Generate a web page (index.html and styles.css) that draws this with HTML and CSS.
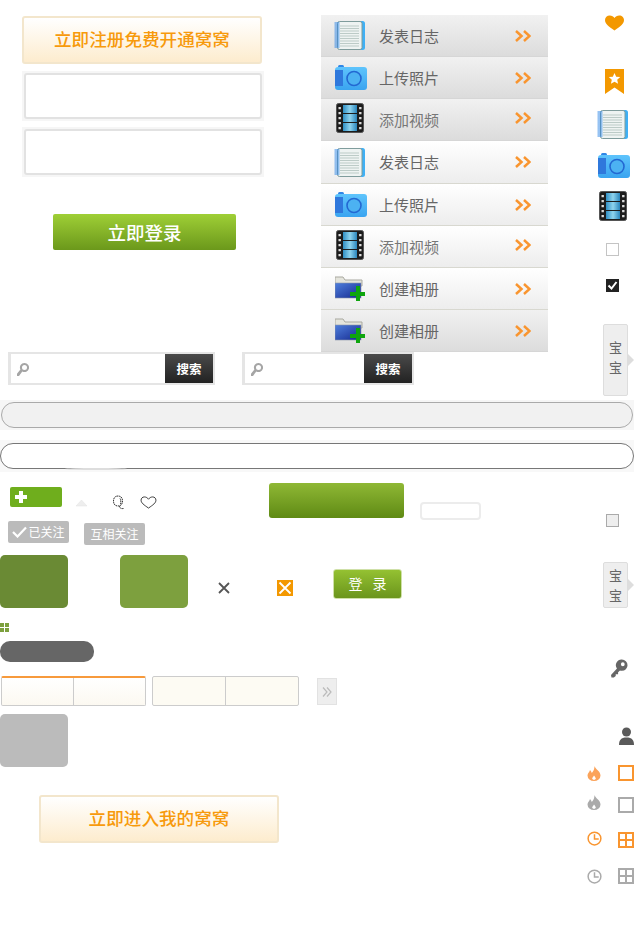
FILE: index.html
```html
<!DOCTYPE html>
<html lang="zh">
<head>
<meta charset="utf-8">
<title>Sprite</title>
<link rel="stylesheet" href="styles.css">
</head>
<body>
<svg class="defs" width="0" height="0" aria-hidden="true">
  <defs>
    <linearGradient id="gFilm" x1="0" x2="1" y1="0" y2="0"><stop offset="0" stop-color="#2f8fc4"/><stop offset=".5" stop-color="#8fd4ee"/><stop offset="1" stop-color="#2a86bd"/></linearGradient>
    <linearGradient id="gFolder" x1="0" x2="1" y1="0" y2="1"><stop offset="0" stop-color="#4f7fdc"/><stop offset="1" stop-color="#14288f"/></linearGradient>
    <linearGradient id="gCam" x1="0" x2="0" y1="0" y2="1"><stop offset="0" stop-color="#5ec4fc"/><stop offset="1" stop-color="#3aa4f0"/></linearGradient>
    <symbol id="i-note" viewBox="0 0 31 29">
      <rect x="5" y="0" width="26" height="29" rx="2.500" fill="#3fb0f5"/>
      <rect x="3.500" y=".5" width="24.500" height="28" rx="2" fill="#eef3f2" stroke="#7f9c9c"/>
      <path d="M6 5h19M6 7.500h19M6 10h19M6 12.500h19M6 15h19M6 17.500h19M6 20h19M6 22.500h19M6 25h19" stroke="#bccbc7" stroke-width="1"/>
      <path d="M.5 2h5M.5 4h5M.5 6h5M.5 8h5M.5 10h5M.5 12h5M.5 14h5M.5 16h5M.5 18h5M.5 20h5M.5 22h5M.5 24h5M.5 26h5" stroke="#2f86e6" stroke-width="1"/>
    </symbol>
    <symbol id="i-cam" viewBox="0 0 32 25">
      <rect x="3" y="0" width="6" height="4" rx="1.500" fill="#2f86e6"/>
      <rect x="0" y="2" width="32" height="23" rx="3" fill="url(#gCam)"/>
      <rect x="0" y="5" width="8" height="16" fill="#2f78dc"/>
      <circle cx="19" cy="13.500" r="7" fill="#4cb2f2" stroke="#2368d2" stroke-width="1.600"/>
    </symbol>
    <symbol id="i-film" viewBox="0 0 28 30">
      <rect x=".5" y=".5" width="27" height="29" rx="2" fill="#1c1c1c" stroke="#555"/>
      <rect x="7" y="2" width="14" height="8" fill="url(#gFilm)"/>
      <rect x="7" y="11" width="14" height="8" fill="url(#gFilm)"/>
      <rect x="7" y="20" width="14" height="8" fill="url(#gFilm)"/>
      <path d="M3.700 4v23M24.300 4v23" stroke="#dcdcdc" stroke-width="2.400" stroke-dasharray="2.200 2.800"/>
    </symbol>
    <symbol id="i-folder" viewBox="0 0 30 25">
      <path d="M0 1h8l2 3h17v6H0z" fill="#e4e4dc" stroke="#a9a9a0"/>
      <rect x="0" y="7" width="26" height="15" fill="url(#gFolder)" stroke="#8a94a8" stroke-width=".6"/>
      <path d="M21 10h4v6h5v4h-5v5h-4v-5h-6v-4h6z" fill="#0ea50e"/>
    </symbol>
    <symbol id="i-chev" viewBox="0 0 16 12">
      <path d="M1 1l5.500 5L1 11M9 1l5.500 5L9 11" fill="none" stroke="#f9952f" stroke-width="2.500"/>
    </symbol>
    <symbol id="i-flame" viewBox="0 0 14 15">
      <path d="M7.500 0C8 3 13.500 5 13.500 9.500A6.500 5.500 0 0 1 7 15 6.500 5.500 0 0 1 .5 9.500C.5 7.500 2.500 6 3 4c1 1 1.500 2 1.800 3C6.500 5 7.500 3 7.500 0zM7 9.500c-.8 1.200-1.800 2.300-1.800 3.500L7 14l1.800-1c0-1.200-1-2.500-1.800-3.500z" fill="currentColor" fill-rule="evenodd"/>
    </symbol>
    <symbol id="i-clock" viewBox="0 0 16 16">
      <circle cx="8" cy="8" r="6.800" fill="none" stroke="currentColor" stroke-width="1.600"/>
      <path d="M8 3.500V8.500H12.500" fill="none" stroke="currentColor" stroke-width="1.600"/>
    </symbol>
    <symbol id="i-key" viewBox="0 0 18 19">
      <path d="M11.500 0a6 6 0 0 1 0 12c-.8 0-1.500-.2-2-.4L7.500 13.500V15.500H5V17.500L3 19H0.500L0 16.500 6.300 9.500A6 6 0 0 1 11.500 0zM12.500 3a2 2 0 1 0 0 4 2 2 0 0 0 0-4z" fill="#666" fill-rule="evenodd"/>
    </symbol>
    <symbol id="i-search" viewBox="0 0 12 13">
      <path d="M7.500 0a4.500 4.500 0 1 1-2.200 8.400L2 13H0V10.800L3.400 6.500A4.500 4.500 0 0 1 7.500 0zM7.500 2a2.500 2.500 0 1 0 0 5 2.500 2.500 0 0 0 0-5z" fill="#a5a5a5" fill-rule="evenodd"/>
    </symbol>
  </defs>
</svg>

<main class="sheet">
  <button class="cta cta-reg">立即注册免费开通窝窝</button>
  <div class="field field-a"><input class="field-in" type="text"></div>
  <div class="field field-b"><input class="field-in" type="text"></div>
  <button class="login">立即登录</button>

  <ul class="menu">
    <li class="row row-gray"><svg class="ico ico-note"><use href="#i-note"/></svg><span class="lbl">发表日志</span><svg class="chev"><use href="#i-chev"/></svg></li>
    <li class="row row-gray"><svg class="ico ico-cam"><use href="#i-cam"/></svg><span class="lbl">上传照片</span><svg class="chev"><use href="#i-chev"/></svg></li>
    <li class="row row-gray row-film"><svg class="ico ico-film"><use href="#i-film"/></svg><span class="lbl">添加视频</span><svg class="chev"><use href="#i-chev"/></svg></li>
    <li class="row row-white row-tall"><svg class="ico ico-note"><use href="#i-note"/></svg><span class="lbl">发表日志</span><svg class="chev"><use href="#i-chev"/></svg></li>
    <li class="row row-white"><svg class="ico ico-cam"><use href="#i-cam"/></svg><span class="lbl">上传照片</span><svg class="chev"><use href="#i-chev"/></svg></li>
    <li class="row row-white row-film"><svg class="ico ico-film"><use href="#i-film"/></svg><span class="lbl">添加视频</span><svg class="chev"><use href="#i-chev"/></svg></li>
    <li class="row row-white"><svg class="ico ico-folder"><use href="#i-folder"/></svg><span class="lbl">创建相册</span><svg class="chev"><use href="#i-chev"/></svg></li>
    <li class="row row-gray"><svg class="ico ico-folder"><use href="#i-folder"/></svg><span class="lbl">创建相册</span><svg class="chev"><use href="#i-chev"/></svg></li>
  </ul>

  <svg class="heart" viewBox="0 0 20 16"><path d="M10 16C4 11.500 0 9 0 4.800 0 2 2.200 0 5 0c2.200 0 4 1 5 2.800C11 1 12.800 0 15 0c2.800 0 5 2 5 4.800C20 9 16 11.500 10 16z" fill="#f39800"/></svg>
  <svg class="bookmark" viewBox="0 0 19 25"><path d="M0 0h19v25l-9.500-6.500L0 25z" fill="#f39800"/><path d="M9.500 4l1.700 3.700 4 .4-3 2.700.9 4-3.600-2.100-3.600 2.100.9-4-3-2.700 4-.4z" fill="#fff"/></svg>
  <svg class="side side-note"><use href="#i-note"/></svg>
  <svg class="side side-cam"><use href="#i-cam"/></svg>
  <svg class="side side-film"><use href="#i-film"/></svg>
  <span class="check check-empty"></span>
  <svg class="check-on" viewBox="0 0 13 13"><rect width="13" height="13" fill="#222"/><path d="M2.500 6.500l3 3 5-6.500" fill="none" stroke="#fff" stroke-width="2"/></svg>
  <div class="tab tab-tall"><span>宝</span><span>宝</span></div>

  <div class="search search-a">
    <svg class="search-ico"><use href="#i-search"/></svg>
    <button class="search-btn">搜索</button>
  </div>
  <div class="search search-b">
    <svg class="search-ico"><use href="#i-search"/></svg>
    <button class="search-btn">搜索</button>
  </div>

  <div class="band band-a"><div class="pill pill-a"></div></div>
  <div class="band band-b"><div class="pill pill-b"></div></div>
  <div class="smudge"></div>

  <div class="add"><svg class="add-plus" viewBox="0 0 12 12"><path d="M4 0h4v4h4v4H8v4H4V8H0V4h4z" fill="#fff"/></svg></div>
  <svg class="tri" viewBox="0 0 11 7"><path d="M5.500 0L11 6H0z" fill="#eee" stroke="#e2e2e2" stroke-width=".5"/></svg>
  <svg class="outline-q" viewBox="0 0 13 15"><path d="M6 1C3 1 1.500 3 1.500 6s1.500 5 4.500 5 4.500-2 4.500-5S9 1 6 1zM8 3.500c1 1 1 4 .5 6M7.500 11c0 2 1.500 3 4 2.500" fill="none" stroke="#333" stroke-width="1" stroke-dasharray="1.500 .6"/></svg>
  <svg class="outline-heart" viewBox="0 0 18 14"><path d="M9 13C4 9.500 1 7.500 1 4.500 1 2.500 2.500 1 4.500 1 6.500 1 8 2 9 3.500 10 2 11.500 1 13.500 1 15.500 1 17 2.500 17 4.500 17 7.500 14 9.500 9 13z" fill="#fff" stroke="#333" stroke-width="1"/></svg>

  <div class="tag tag-a"><svg class="tag-tick" viewBox="0 0 15 12"><path d="M1 6l4.500 4.500L14 1.500" fill="none" stroke="#fff" stroke-width="2.200"/></svg>已关注</div>
  <div class="tag tag-b">互相关注</div>

  <div class="block block-dark"></div>
  <div class="block block-light"></div>
  <div class="block block-gray"></div>
  <svg class="x" viewBox="0 0 12 12"><path d="M1 1l10 10M11 1L1 11" stroke="#555" stroke-width="1.800"/></svg>
  <svg class="x-box" viewBox="0 0 16 16"><rect width="16" height="16" fill="#f39800"/><path d="M2.500 2.500l11 11M13.500 2.500l-11 11" stroke="#fff" stroke-width="1.800"/></svg>
  <button class="mini-login">登 录</button>
  <div class="big-green"></div>
  <div class="blank"></div>

  <svg class="mini-grid" viewBox="0 0 9 9"><path d="M0 0h4v4H0zM5 0h4v4H5zM0 5h4v4H0zM5 5h4v4H5z" fill="#7da03e"/></svg>
  <div class="dark-pill"></div>

  <div class="duo duo-on"><span class="duo-cell"></span><span class="duo-cell"></span></div>
  <div class="duo duo-off"><span class="duo-cell"></span><span class="duo-cell"></span></div>
  <div class="more"><svg class="more-ico" viewBox="0 0 10 10"><path d="M1 .5L5 5 1 9.500M5 .5L9 5 5 9.500" fill="none" stroke="#bbb" stroke-width="1.200"/></svg></div>

  <button class="cta cta-enter">立即进入我的窝窝</button>

  <span class="check check-fill"></span>
  <div class="tab tab-short"><span>宝</span><span>宝</span></div>
  <svg class="key"><use href="#i-key"/></svg>
  <svg class="person" viewBox="0 0 15 18"><circle cx="7.500" cy="5" r="4.500" fill="#5a5a5a"/><path d="M0 18c0-5 2-7.500 7.500-7.500S15 13 15 18z" fill="#5a5a5a"/></svg>

  <div class="legend">
    <svg class="flame flame-on"><use href="#i-flame"/></svg><span class="sq sq-on"></span>
    <svg class="flame flame-off"><use href="#i-flame"/></svg><span class="sq sq-off"></span>
    <svg class="clock clock-on"><use href="#i-clock"/></svg><span class="grid4 grid4-on"><i></i><i></i><i></i><i></i></span>
    <svg class="clock clock-off"><use href="#i-clock"/></svg><span class="grid4 grid4-off"><i></i><i></i><i></i><i></i></span>
  </div>
</main>
</body>
</html>
```

FILE: styles.css
```css
* { box-sizing: border-box; }
html, body { margin: 0; padding: 0; background: #fff; }
body { font-family: "Noto Sans CJK SC", "Liberation Sans", sans-serif; }
button { font-family: inherit; padding: 0; cursor: pointer; }
.defs { position: absolute; }
.sheet { position: relative; width: 634px; height: 936px; overflow: hidden; }
.sheet > * { position: absolute; }

/* orange call to action */
.cta { width: 240px; height: 48px; padding-bottom: 2px; border: 2px solid #f3e6cc; border-radius: 3px; background: linear-gradient(#fff, #fdecce); color: #f79a0c; font-size: 17.6px; font-weight: 500; line-height: 40px; }
.cta-reg { left: 22px; top: 16px; }
.cta-enter { left: 39px; top: 795px; }

/* inputs */
.field { left: 22px; width: 242px; height: 50px; padding: 2px; background: #f6f6f6; }
.field-a { top: 71px; }
.field-b { top: 127px; }
.field-in { display: block; width: 238px; height: 46px; margin: 0; border: 2px solid #e2e2e2; border-radius: 3px; background: #fff; }

.login { left: 53px; top: 214px; width: 183px; height: 36px; border: 0; border-radius: 2px; background: linear-gradient(#9fcf36, #6b981b); color: #fff; font-size: 18.5px; font-weight: 500; }

/* menu list */
.menu { left: 321px; top: 15px; width: 227px; margin: 0; padding: 0; list-style: none; }
.row { display: flex; align-items: center; height: 42px; padding-left: 13px; }
.row-tall { height: 43px; }
.row-gray { background: linear-gradient(#f1f1f1, #dcdcdc); border-bottom: 1px solid #d6d6d6; }
.row-white { background: linear-gradient(#fff, #ededed); border-bottom: 1px solid #d8d8d0; }
.ico { flex: none; }
.ico-note { width: 31px; height: 29px; }
.ico-cam { width: 32px; height: 25px; margin-left: 1px; margin-right: -2px; }
.ico-film { width: 28px; height: 30px; margin-left: 2px; margin-right: 1px; margin-bottom: 4px; }
.ico-folder { width: 30px; height: 25px; margin-left: 1px; }
.lbl { margin-left: 14px; width: 122px; color: #666; font-size: 15px; line-height: 20px; flex: none; }
.row-film .lbl { color: #777; }
.chev { flex: none; width: 16px; height: 12px; margin-left: 14px; }
.row-film .chev { margin-bottom: 4px; }

/* right column */
.heart { left: 605px; top: 15px; width: 19px; height: 16px; }
.bookmark { left: 605px; top: 69px; width: 19px; height: 25px; }
.side-note { left: 597px; top: 110px; width: 31px; height: 29px; }
.side-cam { left: 598px; top: 153px; width: 32px; height: 25px; }
.side-film { left: 599px; top: 191px; width: 28px; height: 30px; }
.check { left: 606px; width: 13px; height: 13px; border: 1px solid #c4c4c4; }
.check-empty { top: 243px; background: #fff; }
.check-fill { top: 514px; background: #eee; border-color: #aaa; }
.check-on { left: 606px; top: 279px; width: 13px; height: 13px; }

.tab { left: 603px; width: 25px; display: flex; flex-direction: column; align-items: center; justify-content: center; gap: 6px; background: #eee; border: 1px solid #ddd; border-radius: 2px; color: #666; font-size: 13px; line-height: 14px; }
.tab::after { content: ""; position: absolute; left: 24px; top: 50%; margin-top: -6px; border-left: 6px solid #ddd; border-top: 6px solid transparent; border-bottom: 6px solid transparent; }
.tab-tall { top: 324px; height: 72px; padding-bottom: 6px; }
.tab-short { top: 562px; height: 46px; }

/* search */
.search { top: 352px; height: 33px; border: 2px solid #e5e5e5; border-left-width: 3px; background: #fff; }
.search-a { left: 8px; width: 207px; }
.search-b { left: 242px; width: 172px; }
.search-ico { position: absolute; left: 6px; top: 9px; width: 12px; height: 13px; }
.search-btn { position: absolute; right: 0; top: 0; width: 48px; height: 29px; border: 0; background: linear-gradient(#4a4a4a, #222); color: #fff; font-size: 12.5px; font-weight: 700; }

/* long pills */
.band { left: 0; width: 634px; }
.band-a { top: 400px; height: 30px; padding-top: 2px; background: #f6f6f6; }
.band-b { top: 440px; height: 32px; padding-top: 3px; background: #f8f8f8; }
.pill { height: 26px; border-radius: 13px; }
.pill-a { margin: 0 1px; background: #f1f1f1; border: 1px solid #aaa; }
.pill-b { background: #fff; border: 1px solid #777; }
.smudge { left: 65px; top: 468px; width: 62px; height: 2px; background: #ddd; border-radius: 50%; }

/* small bits */
.add { left: 10px; top: 487px; width: 52px; height: 20px; border-radius: 2px; background: #6fae1d; }
.add-plus { position: absolute; left: 5px; top: 4px; width: 12px; height: 12px; }
.tri { left: 76px; top: 500px; width: 11px; height: 7px; }
.outline-q { left: 112px; top: 495px; width: 13px; height: 15px; }
.outline-heart { left: 140px; top: 496px; width: 17px; height: 13px; }

.tag { width: 61px; height: 22px; display: flex; align-items: center; justify-content: center; background: #bbb; border-radius: 2px; color: #fff; font-size: 12px; line-height: 22px; }
.tag-a { left: 8px; top: 521px; }
.tag-b { left: 84px; top: 523px; }
.tag-tick { flex: none; width: 15px; height: 12px; margin-right: 1px; }

.block { width: 68px; height: 53px; border-radius: 5px; }
.block-dark { left: 0; top: 555px; background: #6a8a34; }
.block-light { left: 120px; top: 555px; background: #7da03e; }
.block-gray { left: 0; top: 714px; background: #bbb; }

.x { left: 218px; top: 582px; width: 12px; height: 12px; }
.x-box { left: 277px; top: 580px; width: 16px; height: 16px; }
.mini-login { left: 333px; top: 569px; width: 69px; height: 30px; padding-bottom: 3px; border: 1px solid #cfe0a8; border-radius: 3px; background: linear-gradient(#94c132, #6b951c); color: #fff; font-size: 14px; word-spacing: 7px; line-height: 24px; }
.big-green { left: 269px; top: 483px; width: 135px; height: 35px; border-radius: 3px; background: linear-gradient(#8fb835, #5f8a14); }
.blank { left: 420px; top: 502px; width: 61px; height: 18px; background: #fff; border: 2px solid #ececec; border-radius: 4px; }

.mini-grid { left: 0; top: 623px; width: 9px; height: 9px; }
.dark-pill { left: 0; top: 641px; width: 94px; height: 21px; background: #666; border-radius: 10px; }

.duo { top: 676px; height: 30px; display: flex; border: 1px solid #ccc; border-radius: 2px; }
.duo-cell { flex: 1; }
.duo-cell + .duo-cell { border-left: 1px solid #ccc; }
.duo-on { left: 1px; width: 145px; border-top: 2px solid #f79a3c; background: linear-gradient(#fff, #fcf9f1); }
.duo-off { left: 152px; width: 147px; background: #fdfbf3; }
.more { left: 317px; top: 678px; width: 20px; height: 27px; display: flex; align-items: center; justify-content: center; background: #eee; border: 1px solid #e2e2e2; }
.more-ico { width: 10px; height: 10px; }

.key { left: 611px; top: 659px; width: 17px; height: 19px; }
.person { left: 619px; top: 727px; width: 15px; height: 18px; }

/* legend */
.legend { left: 587px; top: 765px; width: 47px; height: 119px; }
.legend > * { position: absolute; }
.flame { left: 0; width: 14px; height: 15px; }
.flame-on { top: 1px; color: #fba35a; }
.flame-off { top: 30px; color: #aaa; }
.sq { left: 31px; width: 16px; height: 16px; border: 2px solid; }
.sq-on { top: 0; border-color: #f9952f; }
.sq-off { top: 32px; border-color: #aaa; }
.clock { left: 0; width: 15px; height: 15px; }
.clock-on { top: 66px; color: #f9952f; }
.clock-off { top: 104px; color: #aaa; }
.grid4 { left: 31px; width: 16px; height: 16px; display: grid; grid-template-columns: 1fr 1fr; gap: 2px; padding: 0; }
.grid4 i { display: block; background: #fff; }
.grid4-on { top: 67px; border: 2px solid #f9952f; background: #f9952f; }
.grid4-off { top: 103px; border: 2px solid #aaa; background: #aaa; }
```
